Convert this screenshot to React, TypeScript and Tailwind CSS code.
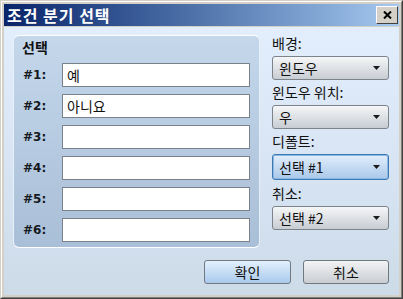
import React from 'react';

const rows = [
  { label: '#1:', value: '예' },
  { label: '#2:', value: '아니요' },
  { label: '#3:', value: '' },
  { label: '#4:', value: '' },
  { label: '#5:', value: '' },
  { label: '#6:', value: '' },
];

const selects = [
  { label: '배경:', value: '윈도우', focused: false },
  { label: '윈도우 위치:', value: '우', focused: false },
  { label: '디폴트:', value: '선택 #1', focused: true },
  { label: '취소:', value: '선택 #2', focused: false },
];

const kr = "font-['Noto_Sans_CJK_KR',_'Noto_Sans',_sans-serif]";

const Arrow = () => (
  <svg width="7" height="4" viewBox="0 0 7 4" className="shrink-0">
    <path d="M0 0 H7 L3.5 4 Z" fill="#1a1a1a" />
  </svg>
);

export default function App() {
  return (
    <div className="w-[403px] h-[299px] bg-[#d4d0c8] border border-t-[#d4d0c8] border-l-[#d4d0c8] border-r-[#404040] border-b-[#404040] flex flex-col">
      <div className="flex-1 border border-t-white border-l-white border-r-[#808080] border-b-[#808080] p-[2px] flex flex-col">
        {/* Title bar */}
        <div className="h-[22px] bg-gradient-to-r from-[#0a246a] to-[#a6caf0] flex items-center justify-between pl-[3px] pr-[1px]">
          <span className={`${kr} text-white font-bold text-[16px] leading-none tracking-[1px]`}>조건 분기 선택</span>
          <button className="w-[22px] h-[18px] bg-[#d4d0c8] border border-t-white border-l-white border-r-[#404040] border-b-[#404040] flex items-center justify-center">
            <svg width="9" height="8" viewBox="0 0 9 8">
              <path d="M1 0.5 L8 7.5 M8 0.5 L1 7.5" stroke="#000" strokeWidth="2" />
            </svg>
          </button>
        </div>

        {/* Body */}
        <div className="flex-1 mt-[1px] bg-gradient-to-b from-[#e3eefd] to-[#cddbe9] pl-[9px] pt-[8px] pr-[5px] flex flex-col">
          <div className="flex gap-[12px]">
            {/* Choices group */}
            <div className="w-[247px] h-[213px] rounded-[6px] border border-t-white border-l-[#e8f0fa] border-r-[#e6eef8] border-b-white bg-gradient-to-b from-[#c4d7eb] to-[#a9bfd7] pl-[8px] pr-[9px] flex flex-col">
              <div className={`${kr} h-[20px] mt-[1px] flex items-center text-[14px] font-bold text-[#111]`}>선택</div>
              <div className="mt-[6px] flex flex-col gap-[7px]">
                {rows.map((r) => (
                  <div key={r.label} className="flex items-center h-[24px]">
                    <span className="w-[40px] pl-[1px] font-['DejaVu_Sans',_sans-serif] font-bold text-[12px] text-[#151a22]">{r.label}</span>
                    <div className={`${kr} flex-1 h-[24px] bg-white border border-[#7b8188] flex items-center pl-[4px] text-[14px] text-[#111]`}>
                      {r.value}
                    </div>
                  </div>
                ))}
              </div>
            </div>

            {/* Right column */}
            <div className="w-[117px] flex flex-col">
              {selects.map((s, i) => (
                <div key={s.label} className="flex flex-col">
                  <div className={`${kr} h-[25px] flex items-center text-[14px] text-[#111] ${i === 0 ? 'mt-[-4px]' : ''} ${i === 3 ? 'mt-[1px]' : ''}`}>{s.label}</div>
                  <div
                    className={`${kr} rounded-[3px] border flex items-center justify-between pl-[6px] pr-[8px] text-[14px] text-[#111] ${
                      s.focused
                        ? 'h-[26px] border-[#3a79b4] shadow-[inset_0_0_0_1px_#8fb8e0] bg-gradient-to-b from-[#e2eefb] to-[#a9c8ea]'
                        : 'h-[24px] border-[#7d838a] bg-gradient-to-b from-[#f5f6f7] to-[#c8cdd3]'
                    }`}
                  >
                    <span>{s.value}</span>
                    <Arrow />
                  </div>
                </div>
              ))}
            </div>
          </div>

          {/* Buttons */}
          <div className="flex justify-end gap-[12px] mt-[12px] pr-[5px]">
            <button className={`${kr} w-[87px] h-[24px] rounded-[3px] border border-[#707880] bg-gradient-to-b from-[#e3f0fd] to-[#a9caec] text-[14px] text-[#111] flex items-center justify-center`}>확인</button>
            <button className={`${kr} w-[86px] h-[24px] rounded-[3px] border border-[#707880] bg-gradient-to-b from-[#f3f4f5] to-[#c9cdd2] text-[14px] text-[#111] flex items-center justify-center`}>취소</button>
          </div>
        </div>
      </div>
    </div>
  );
}
